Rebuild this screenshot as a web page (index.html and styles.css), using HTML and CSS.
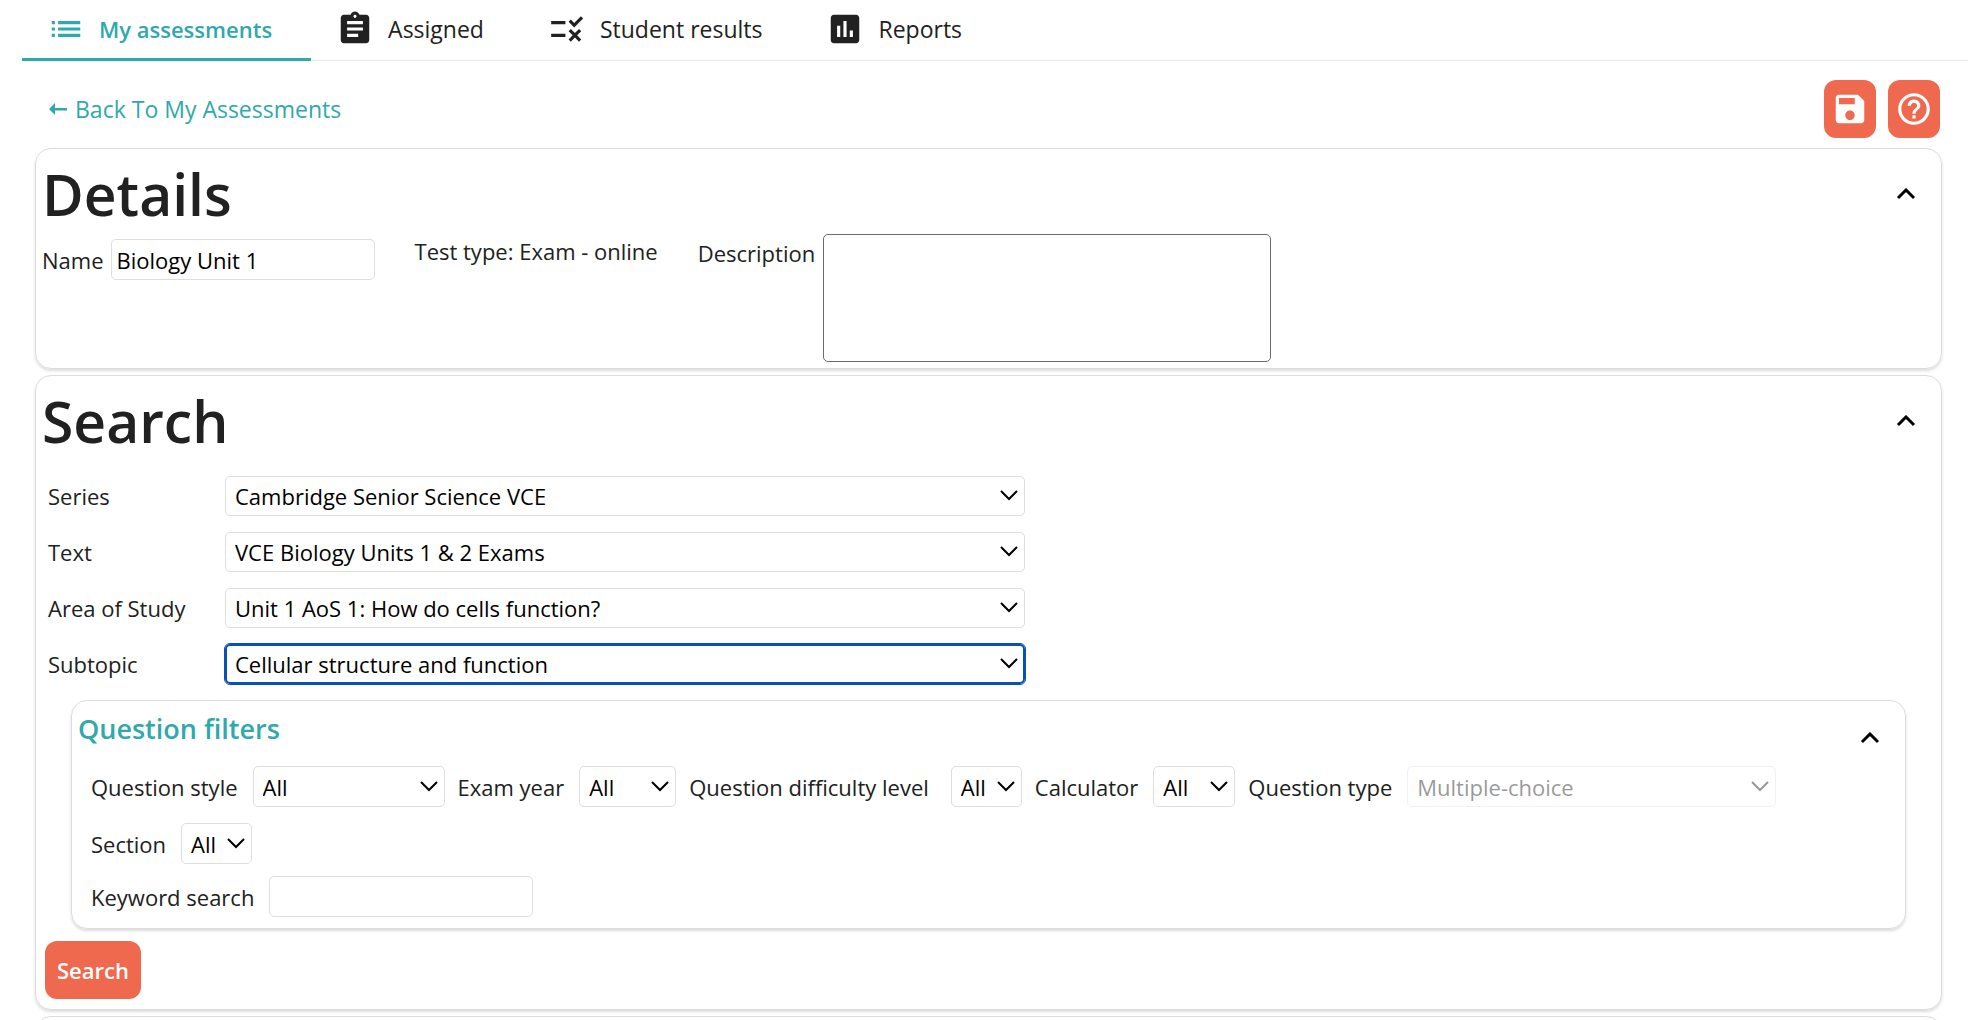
FILE: index.html
```html
<!DOCTYPE html>
<html lang="en">
<head>
  <meta charset="UTF-8" />
  <meta name="viewport" content="width=device-width, initial-scale=1.0" />
  <title>My assessments</title>
  <link rel="stylesheet" href="styles.css">
</head>
<body>
  <nav class="tabs">
    <a class="tab active" href="#assessments">
      <svg class="icon" viewBox="0 0 24 24"><path d="M3 9h2V7H3v2zm0 4h2v-2H3v2zm0 4h2v-2H3v2zm4 0h14v-2H7v2zm0-4h14v-2H7v2zm0-6v2h14V7H7z"/></svg>
      My assessments
    </a>
    <a class="tab" href="#assigned">
      <svg class="icon" viewBox="0 0 24 24"><path d="M19 3h-4.18C14.4 1.84 13.3 1 12 1s-2.4.84-2.82 2H5c-1.1 0-2 .9-2 2v14c0 1.1.9 2 2 2h14c1.1 0 2-.9 2-2V5c0-1.1-.9-2-2-2zm-7 0c.55 0 1 .45 1 1s-.45 1-1 1-1-.45-1-1 .45-1 1-1zm2 14H7v-2h7v2zm3-4H7v-2h10v2zm0-4H7V7h10v2z"/></svg>
      Assigned
    </a>
    <a class="tab" href="#results">
      <svg class="icon" viewBox="0 0 24 24"><path d="M16.54 11L13 7.46l1.41-1.41 2.12 2.12 4.24-4.24 1.41 1.41L16.54 11zM11 7H2v2h9V7zm10 6.41L19.59 12 17 14.59 14.41 12 13 13.41 15.59 16 13 18.59 14.41 20 17 17.41 19.59 20 21 18.59 18.41 16 21 13.41zM11 15H2v2h9v-2z"/></svg>
      Student results
    </a>
    <a class="tab" href="#reports">
      <svg class="icon" viewBox="0 0 24 24"><path d="M19 3H5c-1.1 0-2 .9-2 2v14c0 1.1.9 2 2 2h14c1.1 0 2-.9 2-2V5c0-1.1-.9-2-2-2zM9 17H7v-7h2v7zm4 0h-2V7h2v10zm4 0h-2v-4h2v4z"/></svg>
      Reports
    </a>
  </nav>

  <main>
    <div class="toolbar">
      <a class="back" href="#assessments">
        <svg class="arrow" viewBox="0 0 18 14"><path d="M0 7l6-6v5h12v2.400H6V13z"/></svg>
        Back To My Assessments
      </a>
      <div class="actions">
        <button class="btn" type="button" aria-label="Save">
          <svg class="icon" viewBox="0 0 24 24"><path d="M17 3H5c-1.110 0-2 .9-2 2v14c0 1.100.890 2 2 2h14c1.100 0 2-.9 2-2V7l-4-4zm-5 16c-1.660 0-3-1.340-3-3s1.340-3 3-3 3 1.340 3 3-1.340 3-3 3zm3-10H5V5h10v4z"/></svg>
        </button>
        <button class="btn" type="button" aria-label="Help">
          <svg class="icon" viewBox="0 0 24 24"><path d="M11 18h2v-2h-2v2zm1-16C6.480 2 2 6.480 2 12s4.480 10 10 10 10-4.480 10-10S17.520 2 12 2zm0 18c-4.410 0-8-3.590-8-8s3.590-8 8-8 8 3.590 8 8-3.590 8-8 8zm0-14c-2.210 0-4 1.790-4 4h2c0-1.100.9-2 2-2s2 .9 2 2c0 2-3 1.750-3 5h2c0-2.250 3-2.500 3-5 0-2.210-1.790-4-4-4z"/></svg>
        </button>
      </div>
    </div>

    <section class="card">
      <div class="card-head">
        <h1>Details</h1>
        <button class="toggle" type="button" aria-label="Collapse details">
          <svg viewBox="0 0 20 12"><path d="M2 10l8-8 8 8"/></svg>
        </button>
      </div>
      <div class="details">
        <div class="name-field">
          <label for="name">Name</label>
          <input class="text-input" id="name" type="text" value="Biology Unit 1">
        </div>
        <p class="test-type">Test type: Exam - online</p>
        <div class="description-field">
          <label for="description">Description</label>
          <textarea id="description"></textarea>
        </div>
      </div>
    </section>

    <section class="card">
      <div class="card-head">
        <h1>Search</h1>
        <button class="toggle" type="button" aria-label="Collapse search">
          <svg viewBox="0 0 20 12"><path d="M2 10l8-8 8 8"/></svg>
        </button>
      </div>

      <div class="topics">
        <label for="series">Series</label>
        <select id="series"><option>Cambridge Senior Science VCE</option></select>
        <label for="text">Text</label>
        <select id="text"><option>VCE Biology Units 1 &amp; 2 Exams</option></select>
        <label for="area">Area of Study</label>
        <select id="area"><option>Unit 1 AoS 1: How do cells function?</option></select>
        <label for="subtopic">Subtopic</label>
        <select class="selected" id="subtopic"><option>Cellular structure and function</option></select>
      </div>

      <div class="card filters">
        <div class="card-head">
          <h2>Question filters</h2>
          <button class="toggle" type="button" aria-label="Collapse question filters">
            <svg viewBox="0 0 20 12"><path d="M2 10l8-8 8 8"/></svg>
          </button>
        </div>
        <div class="filter-row">
          <div class="filter">
            <label for="style">Question style</label>
            <select class="w-style" id="style"><option>All</option></select>
          </div>
          <div class="filter">
            <label for="year">Exam year</label>
            <select class="w-year" id="year"><option>All</option></select>
          </div>
          <div class="filter difficulty">
            <label for="level">Question difficulty level</label>
            <select class="w-small" id="level"><option>All</option></select>
          </div>
          <div class="filter">
            <label for="calculator">Calculator</label>
            <select class="w-calc" id="calculator"><option>All</option></select>
          </div>
          <div class="filter">
            <label for="type">Question type</label>
            <select class="w-type" id="type" disabled><option>Multiple-choice</option></select>
          </div>
          <div class="filter">
            <label for="section">Section</label>
            <select class="w-small" id="section"><option>All</option></select>
          </div>
        </div>
        <div class="filter keyword">
          <label for="keyword">Keyword search</label>
          <input class="text-input" id="keyword" type="text">
        </div>
      </div>

      <button class="btn search-btn" type="button">Search</button>
    </section>

    <section class="card next"></section>
  </main>
</body>
</html>
```

FILE: styles.css
```css
* {
  box-sizing: border-box;
}

body {
  margin: 0;
  height: 100vh;
  overflow: hidden;
  font-family: 'Open Sans', sans-serif;
  font-size: 22px;
  line-height: 30px;
  color: #212121;
  background: #fff;
}

h1, h2, p {
  margin: 0;
}

a {
  color: inherit;
  text-decoration: none;
}

input, select, textarea, button {
  font: inherit;
}

/* tabs */
.tabs {
  display: flex;
  margin-left: 22px;
  box-shadow: inset 0 -1px #e8e8e8;
}

.tab {
  display: flex;
  align-items: center;
  gap: 14px;
  height: 61px;
  padding: 0 39px 0 25px;
  border-bottom: 3px solid transparent;
  font-size: 23px;
  font-weight: 500;
}

.tab.active {
  color: #2fa9ab;
  border-bottom-color: #2fa9ab;
  font-size: 22px;
  font-weight: 600;
}

.icon {
  width: 38px;
  height: 38px;
  fill: currentColor;
  flex: none;
}

/* back link and action buttons */
main {
  padding: 0 26px 0 35px;
}

.toolbar {
  display: flex;
  justify-content: space-between;
  align-items: center;
  padding: 19px 2px 10px 14px;
}

.back {
  display: flex;
  align-items: center;
  gap: 8px;
  color: #2fa9ab;
  font-size: 23px;
  font-weight: 500;
}

.arrow {
  width: 18px;
  height: 14px;
  fill: currentColor;
}

.actions {
  display: flex;
  gap: 12px;
}

.btn {
  display: flex;
  align-items: center;
  height: 58px;
  padding: 0 7px;
  border: 0;
  border-radius: 12px;
  background: #ef694f;
  color: #fff;
  font-weight: 600;
}

/* cards */
.card {
  margin-bottom: 6px;
  padding: 10px 6px 6px;
  border: 1px solid #dcdcdc;
  border-radius: 16px;
  box-shadow: 0 2px 3px rgba(0, 0, 0, 0.14);
}

.card-head {
  display: flex;
  justify-content: space-between;
  align-items: center;
}

h1 {
  font-size: 57px;
  line-height: 70px;
  font-weight: 600;
}

h2 {
  color: #2fa9ab;
  font-size: 27px;
  line-height: 34px;
  font-weight: 600;
}

.toggle {
  display: flex;
  padding: 0 19px;
  border: 0;
  background: none;
}

.toggle svg {
  width: 20px;
  height: 12px;
  fill: none;
  stroke: #000;
  stroke-width: 3;
}

/* form controls */
.text-input, select {
  height: 41px;
  border: 1px solid #dedede;
  border-radius: 5px;
  background: #fff;
  color: #000;
}

.text-input {
  width: 264px;
  padding: 0 5px;
}

select {
  appearance: none;
  padding: 0 30px 0 9px;
  background: #fff url("data:image/svg+xml,%3Csvg xmlns='http://www.w3.org/2000/svg' width='18' height='12' fill='none' stroke='%23000' stroke-width='2'%3E%3Cpath d='M1 1l8 8 8-8'/%3E%3C/svg%3E") no-repeat right 6px center;
}

select:disabled {
  opacity: 0.4;
}

textarea {
  display: block;
  width: 448px;
  height: 128px;
  border: 1px solid #6b6b6b;
  border-radius: 5px;
  resize: none;
}

/* details */
.details {
  display: flex;
  gap: 40px;
  padding-top: 5px;
}

.name-field {
  display: flex;
  align-items: center;
  align-self: flex-start;
  gap: 7px;
  padding-top: 5px;
}

.test-type {
  padding-top: 2px;
}

.description-field {
  display: flex;
  gap: 8px;
}

.description-field label {
  padding-top: 4px;
}

/* search */
.topics {
  display: grid;
  grid-template-columns: 177px minmax(0, 800px);
  row-gap: 16px;
  align-items: center;
  padding: 20px 6px 16px;
}

.topics select {
  height: 40px;
}

.topics .selected {
  border: 2px solid #0b4fb8;
  outline: 1px solid #0b4fb8;
  padding-left: 8px;
  background-position: right 5px center;
}

.filters {
  margin: 0 29px 12px;
  padding: 11px 6px;
}

.filters .toggle {
  padding-top: 18px;
}

.filter-row {
  display: flex;
  flex-wrap: wrap;
  gap: 16px 13px;
  padding: 20px 13px 12px;
}

.filter {
  display: flex;
  align-items: center;
  gap: 15px;
}

.difficulty {
  gap: 22px;
}

.keyword {
  padding-left: 13px;
}

.w-style {
  width: 192px;
}

.w-year {
  width: 97px;
}

.w-small {
  width: 71px;
}

.w-calc {
  width: 82px;
}

.w-type {
  width: 369px;
}

.w-small, .w-calc {
  padding-right: 0;
}

.search-btn {
  margin: 0 0 4px 3px;
  padding: 0 12px;
}

.next {
  height: 120px;
}
```
